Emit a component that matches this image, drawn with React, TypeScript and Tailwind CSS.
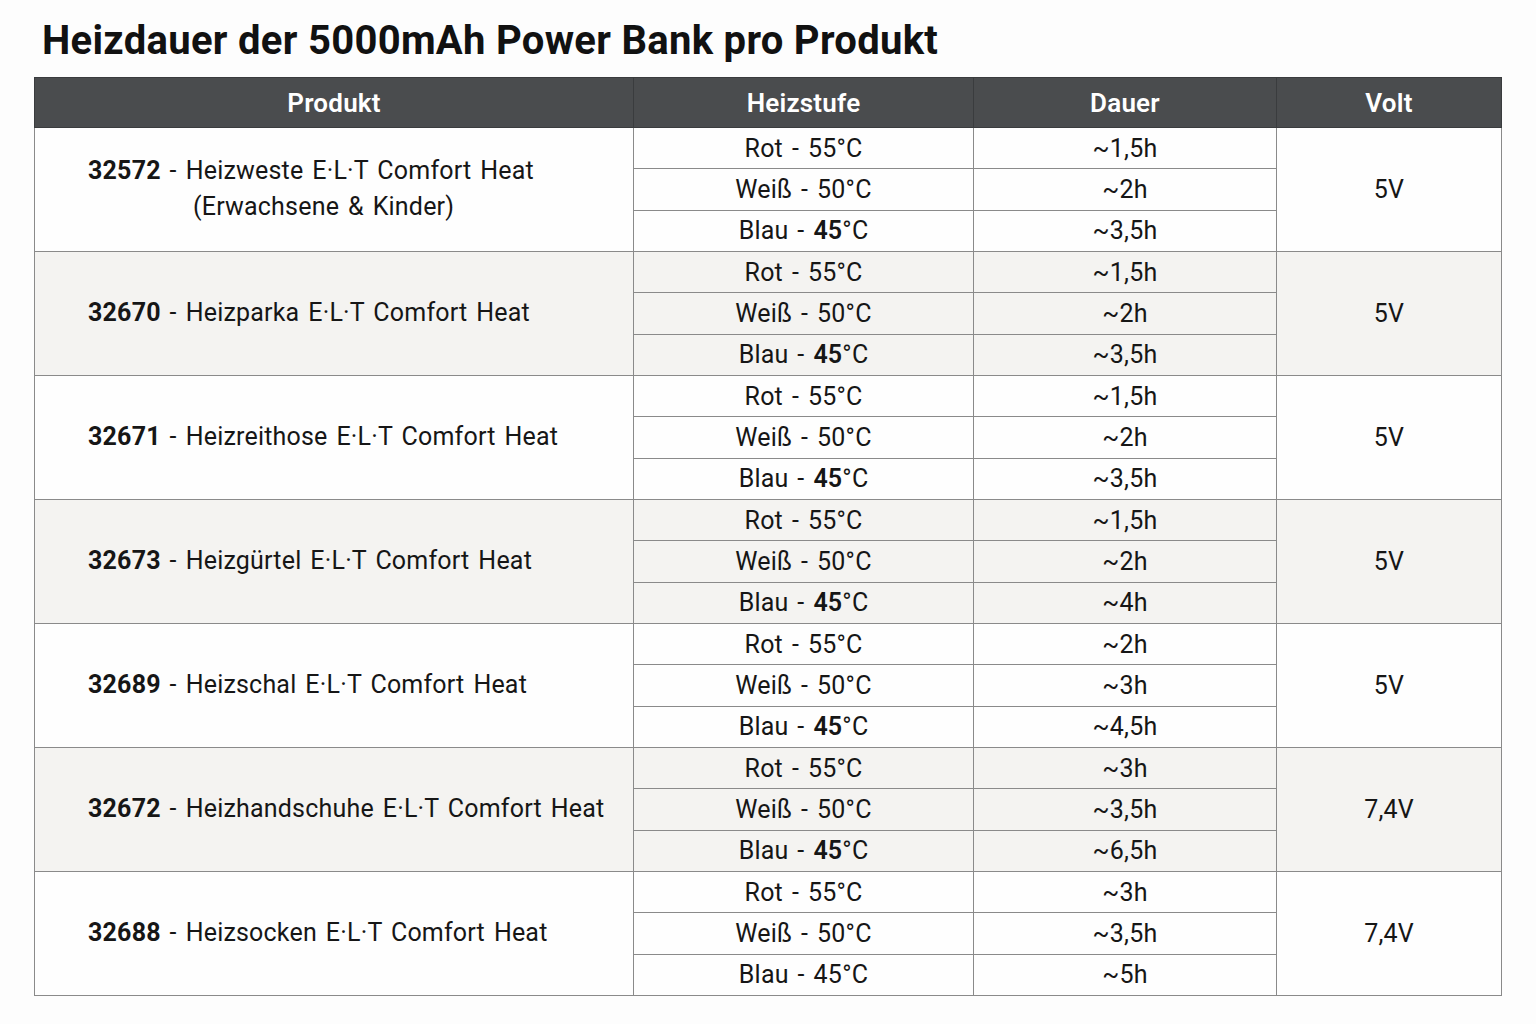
const FONT = "font-['Roboto','Liberation_Sans',sans-serif]";

type Level = { stufe: string; temp: string; dauer: string };

type Product = {
  nr: string;
  name: string;
  extra?: string;
  volt: string;
  levels: Level[];
  boldTemp: boolean;
};

const std = (a: string, b: string, c: string): Level[] => [
  { stufe: 'Rot', temp: '55', dauer: a },
  { stufe: 'Weiß', temp: '50', dauer: b },
  { stufe: 'Blau', temp: '45', dauer: c },
];

const PRODUCTS: Product[] = [
  {
    nr: '32572',
    name: 'Heizweste E·L·T Comfort Heat',
    extra: '(Erwachsene & Kinder)',
    volt: '5V',
    levels: std('~1,5h', '~2h', '~3,5h'),
    boldTemp: true,
  },
  { nr: '32670', name: 'Heizparka E·L·T Comfort Heat', volt: '5V', levels: std('~1,5h', '~2h', '~3,5h'), boldTemp: true },
  { nr: '32671', name: 'Heizreithose E·L·T Comfort Heat', volt: '5V', levels: std('~1,5h', '~2h', '~3,5h'), boldTemp: true },
  { nr: '32673', name: 'Heizgürtel E·L·T Comfort Heat', volt: '5V', levels: std('~1,5h', '~2h', '~4h'), boldTemp: true },
  { nr: '32689', name: 'Heizschal E·L·T Comfort Heat', volt: '5V', levels: std('~2h', '~3h', '~4,5h'), boldTemp: true },
  { nr: '32672', name: 'Heizhandschuhe E·L·T Comfort Heat', volt: '7,4V', levels: std('~3h', '~3,5h', '~6,5h'), boldTemp: true },
  { nr: '32688', name: 'Heizsocken E·L·T Comfort Heat', volt: '7,4V', levels: std('~3h', '~3,5h', '~5h'), boldTemp: false },
];

const cell = 'border border-[#8a8a8a] p-0';

export default function App() {
  return (
    <div className={`min-h-screen bg-[#fdfdfd] pl-[34px] pt-[17px] text-[#161616] ${FONT}`}>
      <h1 className="pl-[8px] text-[40px] font-bold leading-[48px] tracking-[0.3px] text-[#111]">
        Heizdauer der 5000mAh Power Bank pro Produkt
      </h1>
      <table className="mt-[12px] table-fixed border-collapse text-[25px] leading-none tracking-[0.2px] [word-spacing:2.5px]">
        <colgroup>
          <col className="w-[599px]" />
          <col className="w-[340px]" />
          <col className="w-[303px]" />
          <col className="w-[225px]" />
        </colgroup>
        <thead>
          <tr className="h-[50px] bg-[#4a4c4e] text-[26px] font-semibold text-white">
            <th className="border border-[#3a3c3e] font-semibold">Produkt</th>
            <th className="border border-[#3a3c3e] font-semibold">Heizstufe</th>
            <th className="border border-[#3a3c3e] font-semibold">Dauer</th>
            <th className="border border-[#3a3c3e] font-semibold">Volt</th>
          </tr>
        </thead>
        <tbody>
          {PRODUCTS.map((p, gi) => {
            const bg = gi % 2 === 1 ? 'bg-[#f4f3f1]' : 'bg-[#fefefe]';
            return p.levels.map((lv, li) => (
              <tr key={`${p.nr}-${li}`} className={`h-[41.33px] ${bg}`}>
                {li === 0 && (
                  <td rowSpan={3} className={`${cell} pl-[53px] align-middle`}>
                    <div className="leading-[36px]">
                      <span className="font-bold">{p.nr}</span> - {p.name}
                    </div>
                    {p.extra && <div className="pl-[105px] leading-[36px]">{p.extra}</div>}
                  </td>
                )}
                <td className={`${cell} text-center`}>
                  {lv.stufe} -{' '}
                  {p.boldTemp && lv.stufe === 'Blau' ? (
                    <span className="font-semibold">{lv.temp}</span>
                  ) : (
                    lv.temp
                  )}
                  °C
                </td>
                <td className={`${cell} text-center`}>{lv.dauer}</td>
                {li === 0 && (
                  <td rowSpan={3} className={`${cell} text-center align-middle`}>
                    {p.volt}
                  </td>
                )}
              </tr>
            ));
          })}
        </tbody>
      </table>
    </div>
  );
}
